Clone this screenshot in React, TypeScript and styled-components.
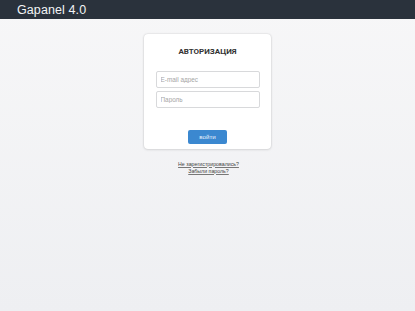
import React from "react";
import styled, { createGlobalStyle } from "styled-components";

const Global = createGlobalStyle`
  html, body { margin: 0; padding: 0; }
  body {
    font-family: "Liberation Sans", Arial, sans-serif;
    background: #eeeff2;
    min-height: 311px;
  }
`;

const Page = styled.div`
  min-height: 311px;
  display: flex;
  flex-direction: column;
  background: linear-gradient(to bottom, #f7f7f8 0%, #eeeff2 100%);
`;

const Header = styled.header`
  height: 19px;
  background: #2a323c;
  display: flex;
  align-items: center;
  padding-left: 17px;
`;

const Brand = styled.span`
  color: #f2f4f6;
  font-size: 12.5px;
  letter-spacing: 0.1px;
`;

const Main = styled.main`
  display: flex;
  flex-direction: column;
  align-items: center;
  padding-top: 15px;
`;

const Card = styled.form`
  width: 127px;
  height: 115px;
  box-sizing: border-box;
  background: #fff;
  border-radius: 4px;
  box-shadow: 0 0 2px rgba(0, 0, 0, 0.18), 0 1px 3px rgba(0, 0, 0, 0.08);
  display: flex;
  flex-direction: column;
  align-items: center;
  padding: 13px 11px 0;
`;

const Title = styled.h1`
  margin: 0 0 13.5px;
  font-family: Roboto, "Liberation Sans", Arial, sans-serif;
  font-size: 8px;
  font-weight: bold;
  color: #333;
  line-height: 10px;
`;

const Input = styled.input<{ $gap?: number }>`
  width: 104px;
  height: 17px;
  flex: none;
  box-sizing: border-box;
  border: 1px solid #d8d9db;
  border-radius: 2px;
  padding: 0 4px;
  font-family: "Liberation Sans", Arial, sans-serif;
  font-size: 6.4px;
  margin: 0 0 ${(p) => p.$gap ?? 3.5}px;
  outline: none;
  &::placeholder { color: #a6a6a6; }
`;

const Button = styled.button`
  margin-top: 22px;
  width: 39px;
  height: 13.5px;
  flex: none;
  border: none;
  border-radius: 2px;
  background: #3b88d0;
  color: #eaf2fb;
  font-family: "Liberation Sans", Arial, sans-serif;
  font-size: 6.2px;
  padding: 0;
`;

const Links = styled.div`
  margin-top: 11.5px;
  display: flex;
  flex-direction: column;
  align-items: center;
`;

const Link = styled.a`
  font-size: 5.25px;
  line-height: 7px;
  color: #444;
  text-decoration: underline;
  text-decoration-color: #777;
  margin-left: 2px;
`;

export default function App() {
  return (
    <Page>
      <Global />
      <Header>
        <Brand>Gapanel 4.0</Brand>
      </Header>
      <Main>
        <Card>
          <Title>АВТОРИЗАЦИЯ</Title>
          <Input placeholder="E-mail адрес" />
          <Input placeholder="Пароль" type="password" $gap={0} />
          <Button type="button">войти</Button>
        </Card>
        <Links>
          <Link href="#">Не зарегистрировались?</Link>
          <Link href="#">Забыли пароль?</Link>
        </Links>
      </Main>
    </Page>
  );
}
